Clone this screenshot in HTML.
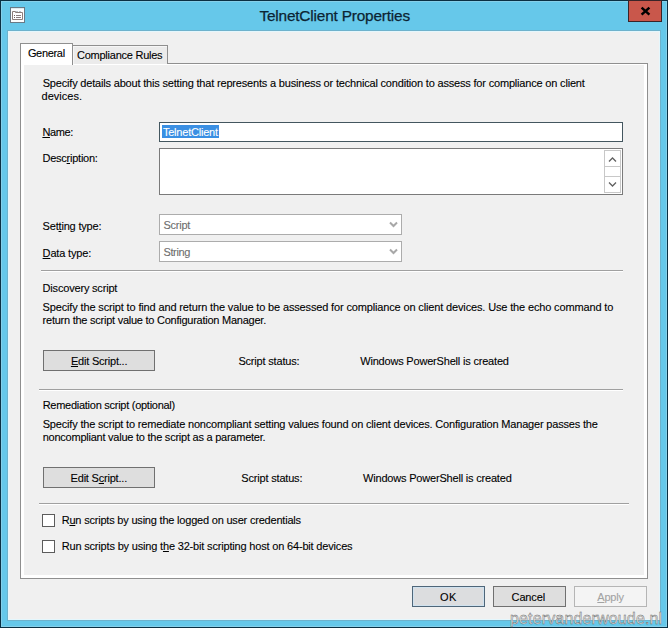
<!DOCTYPE html>
<html><head><meta charset="utf-8"><style>
html,body{margin:0;padding:0;}
body{width:668px;height:628px;overflow:hidden;position:relative;background:#66c8ea;font-family:'Liberation Sans',sans-serif;}
.a{position:absolute;box-sizing:border-box;}
.t{position:absolute;white-space:pre;font-family:"Liberation Sans",sans-serif;-webkit-text-stroke:0.1px currentColor;}
.t u{text-decoration:underline;text-underline-offset:1px;text-decoration-thickness:1px;text-decoration-skip-ink:none;}

</style></head><body>
<!-- outer frame -->
<div class="a" style="left:0;top:0;width:668px;height:628px;border:1px solid #0a3044;"></div>
<div class="a" style="left:1px;top:1px;width:666px;height:626px;border:1px solid #86d0ea;"></div>
<!-- client outline -->
<div class="a" style="left:7px;top:30px;width:654px;height:591px;border:1px solid #6eb2cc;"></div>
<div class="a" style="left:8px;top:31px;width:652px;height:589px;border:1px solid #e4f7fd;background:#f0f0f0;"></div>
<!-- close button -->
<div class="a" style="left:628px;top:0;width:34px;height:22px;background:#c9574b;border:1px solid #3a2428;"></div>
<svg class="a" style="left:640px;top:6px" width="11" height="10" viewBox="0 0 11 10"><path d="M1.6 1.6 L9.4 8.6 M9.4 1.6 L1.6 8.6" stroke="#000" stroke-width="2.5" stroke-linecap="butt"/></svg>
<!-- app icon -->
<svg class="a" style="left:10px;top:7px" width="15" height="16" viewBox="0 0 15 16">
 <rect x="0.5" y="0.5" width="14" height="15" fill="#fbfdfe" stroke="#687a86" stroke-width="1"/>
 <rect x="1" y="1" width="13" height="1" fill="#dfe9ee"/>
 <path d="M2.5 4.5 H5.5 V5.5 H12.5 V12.5 H2.5 Z" fill="#fff" stroke="#8c7e7a" stroke-width="1"/>
 <rect x="6" y="4" width="2" height="1" fill="#b9c5cc"/>
 <rect x="9" y="4" width="2" height="1" fill="#b9c5cc"/>
 <rect x="4" y="8" width="1" height="1" fill="#6a5f60"/>
 <rect x="6" y="8" width="5" height="1" fill="#8a7f80"/>
 <rect x="4" y="10" width="1" height="1" fill="#6a5f60"/>
 <rect x="6" y="10" width="5" height="1" fill="#8a7f80"/>
</svg>

<!-- tab panel -->
<div class="a" style="left:20px;top:63px;width:628px;height:516px;border:1px solid #8f8f8f;background:#fff;"></div>
<div class="a" style="left:24px;top:65px;width:620px;height:510px;background:#f0f0f0;"></div>
<!-- tabs -->
<div class="a" style="left:72px;top:45px;width:96px;height:19px;border:1px solid #8f8f8f;border-bottom:none;background:#ebebeb;box-shadow:inset 1px 1px 0 #f6f6f6;"></div>
<div class="a" style="left:20px;top:43px;width:53px;height:22px;border:1px solid #8f8f8f;border-bottom:none;background:#fff;"></div>

<!-- name textbox -->
<div class="a" style="left:159px;top:122px;width:464px;height:20px;border:1px solid #43565f;background:#fff;"></div>
<div class="a" style="left:162px;top:125px;width:57px;height:13px;background:#3a8fe3;"></div>
<!-- description -->
<div class="a" style="left:159px;top:148px;width:464px;height:47px;border:1px solid #7a7a7a;background:#fff;"></div>
<div class="a" style="left:604px;top:150px;width:17px;height:43px;border:1px solid #c8c8c8;background:#fff;"></div>
<div class="a" style="left:604px;top:166px;width:17px;height:11px;border:1px solid #c8c8c8;border-left:none;border-right:none;"></div>
<svg class="a" style="left:608px;top:156px" width="9" height="7" viewBox="0 0 9 7"><path d="M1 5.5 L4.5 2 L8 5.5" fill="none" stroke="#606060" stroke-width="1.3"/></svg>
<svg class="a" style="left:608px;top:181px" width="9" height="7" viewBox="0 0 9 7"><path d="M1 1.5 L4.5 5 L8 1.5" fill="none" stroke="#606060" stroke-width="1.3"/></svg>

<!-- combos -->
<div class="a" style="left:159px;top:214px;width:243px;height:21px;border:1px solid #acacac;background:#fff;"></div>
<svg class="a" style="left:389px;top:221px" width="9" height="8" viewBox="0 0 9 8"><path d="M1 1.5 L4.5 5 L8 1.5" fill="none" stroke="#a8a8a8" stroke-width="2"/></svg>
<div class="a" style="left:159px;top:241px;width:243px;height:21px;border:1px solid #acacac;background:#fff;"></div>
<svg class="a" style="left:389px;top:248px" width="9" height="8" viewBox="0 0 9 8"><path d="M1 1.5 L4.5 5 L8 1.5" fill="none" stroke="#a8a8a8" stroke-width="2"/></svg>

<!-- separators -->
<div class="a" style="left:41px;top:270px;width:582px;height:1px;background:#a0a0a0;"></div>
<div class="a" style="left:41px;top:271px;width:582px;height:1px;background:#fff;"></div>
<div class="a" style="left:39px;top:389px;width:584px;height:1px;background:#a0a0a0;"></div>
<div class="a" style="left:39px;top:390px;width:584px;height:1px;background:#fff;"></div>
<div class="a" style="left:39px;top:503px;width:590px;height:1px;background:#a0a0a0;"></div>
<div class="a" style="left:39px;top:504px;width:590px;height:1px;background:#fff;"></div>

<!-- edit script buttons -->
<div class="a" style="left:43px;top:350px;width:112px;height:21px;border:1px solid #707070;background:#dedede;"></div>
<div class="a" style="left:43px;top:467px;width:112px;height:21px;border:1px solid #707070;background:#dedede;"></div>

<!-- checkboxes -->
<div class="a" style="left:42px;top:514px;width:13px;height:13px;border:1px solid #5c5c5c;background:#fff;"></div>
<div class="a" style="left:42px;top:540px;width:13px;height:13px;border:1px solid #5c5c5c;background:#fff;"></div>

<!-- dialog buttons -->
<div class="a" style="left:412px;top:586px;width:73px;height:21px;border:1px solid #4f6679;background:#dcdddf;box-shadow:inset 0 0 0 1px #d0e2ef;"></div>
<div class="a" style="left:493px;top:586px;width:73px;height:21px;border:1px solid #707070;background:#dedede;"></div>
<div class="a" style="left:574px;top:586px;width:73px;height:21px;border:1px solid #b5b5b5;background:#f4f4f4;"></div>

<!-- watermark -->
<div class="t" style="left:510px;top:608px;font-size:16px;line-height:22px;color:#e4e4e4;letter-spacing:0.15px;-webkit-text-stroke:0.4px #5e5e5e;">petervanderwoude.nl</div>

<div class="t" style="left:259.4px;top:6.5px;font-size:15.4px;line-height:18px;color:#0c2433;letter-spacing:-0.184px;-webkit-text-stroke:0.25px currentColor;">TelnetClient Properties</div>
<div class="t" style="left:27.9px;top:47px;font-size:11px;line-height:13px;color:#000;letter-spacing:-0.323px;">General</div>
<div class="t" style="left:77.0px;top:49px;font-size:11px;line-height:13px;color:#000;letter-spacing:-0.244px;">Compliance Rules</div>
<div class="t" style="left:42.7px;top:77px;font-size:11px;line-height:13px;color:#000;letter-spacing:-0.183px;">Specify details about this setting that represents a business or technical condition to assess for compliance on client</div>
<div class="t" style="left:41.6px;top:90px;font-size:11px;line-height:13px;color:#000;letter-spacing:0.006px;">devices.</div>
<div class="t" style="left:42.4px;top:126px;font-size:11px;line-height:13px;color:#000;letter-spacing:-0.402px;"><u>N</u>ame:</div>
<div class="t" style="left:42.5px;top:152px;font-size:11px;line-height:13px;color:#000;letter-spacing:-0.243px;">Desc<u>r</u>iption:</div>
<div class="t" style="left:42.6px;top:220px;font-size:11px;line-height:13px;color:#000;letter-spacing:-0.188px;">Set<u>t</u>ing type:</div>
<div class="t" style="left:42.6px;top:247px;font-size:11px;line-height:13px;color:#000;letter-spacing:-0.171px;"><u>D</u>ata type:</div>
<div class="t" style="left:163.4px;top:219px;font-size:11px;line-height:13px;color:#6d6d6d;letter-spacing:-0.225px;">Script</div>
<div class="t" style="left:163.4px;top:246px;font-size:11px;line-height:13px;color:#6d6d6d;letter-spacing:-0.350px;">String</div>
<div class="t" style="left:42.6px;top:282px;font-size:11px;line-height:13px;color:#000;letter-spacing:-0.188px;">Discovery script</div>
<div class="t" style="left:42.6px;top:301px;font-size:11px;line-height:13px;color:#000;letter-spacing:-0.147px;">Specify the script to find and return the value to be assessed for compliance on client devices. Use the echo command to</div>
<div class="t" style="left:42.6px;top:314px;font-size:11px;line-height:13px;color:#000;letter-spacing:-0.246px;">return the script value to Configuration Manager.</div>
<div class="t" style="left:70.9px;top:355px;font-size:11px;line-height:13px;color:#000;letter-spacing:-0.207px;"><u>E</u>dit Script...</div>
<div class="t" style="left:238.4px;top:355px;font-size:11px;line-height:13px;color:#000;letter-spacing:-0.183px;">Script status:</div>
<div class="t" style="left:360.2px;top:355px;font-size:11px;line-height:13px;color:#000;letter-spacing:-0.189px;">Windows PowerShell is created</div>
<div class="t" style="left:42.7px;top:399px;font-size:11px;line-height:13px;color:#000;letter-spacing:-0.268px;">Remediation script (optional)</div>
<div class="t" style="left:42.7px;top:418px;font-size:11px;line-height:13px;color:#000;letter-spacing:-0.179px;">Specify the script to remediate noncompliant setting values found on client devices. Configuration Manager passes the</div>
<div class="t" style="left:42.7px;top:431px;font-size:11px;line-height:13px;color:#000;letter-spacing:-0.240px;">noncompliant value to the script as a parameter.</div>
<div class="t" style="left:70.6px;top:472px;font-size:11px;line-height:13px;color:#000;letter-spacing:-0.207px;">Edit S<u>c</u>ript...</div>
<div class="t" style="left:241.3px;top:472px;font-size:11px;line-height:13px;color:#000;letter-spacing:-0.183px;">Script status:</div>
<div class="t" style="left:363.0px;top:472px;font-size:11px;line-height:13px;color:#000;letter-spacing:-0.189px;">Windows PowerShell is created</div>
<div class="t" style="left:61.7px;top:514px;font-size:11px;line-height:13px;color:#000;letter-spacing:-0.202px;">R<u>u</u>n scripts by using the logged on user credentials</div>
<div class="t" style="left:61.7px;top:540px;font-size:11px;line-height:13px;color:#000;letter-spacing:-0.177px;">Run scripts by using t<u>h</u>e 32-bit scripting host on 64-bit devices</div>
<div class="t" style="left:439.9px;top:591px;font-size:11px;line-height:13px;color:#000;letter-spacing:0.494px;">OK</div>
<div class="t" style="left:511.6px;top:591px;font-size:11px;line-height:13px;color:#000;letter-spacing:-0.150px;">Cancel</div>
<div class="t" style="left:597.3px;top:591px;font-size:11px;line-height:13px;color:#a3a3a3;letter-spacing:-0.233px;"><u>A</u>pply</div>
<div class="t" style="left:162.9px;top:126px;font-size:11px;line-height:13px;color:#fff;letter-spacing:-0.208px;">TelnetClient</div>
</body></html>
